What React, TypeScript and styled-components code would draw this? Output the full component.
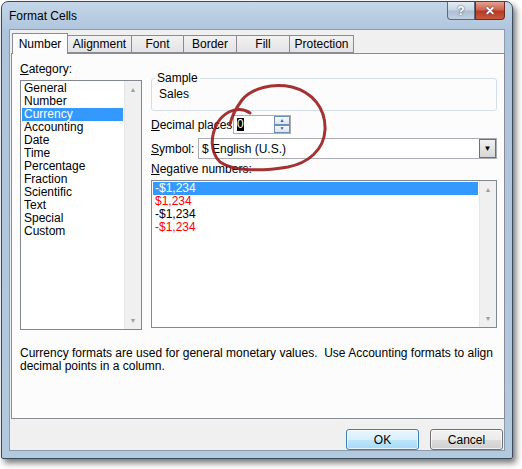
import React from 'react';
import styled, { createGlobalStyle } from 'styled-components';

const Global = createGlobalStyle`
  html, body { margin: 0; background: #ffffff; }
  body { font-family: "Liberation Sans", Arial, sans-serif; font-size: 12px; color: #000; }
`;

const Page = styled.div`
  position: relative;
  width: 522px;
  height: 469px;
  overflow: hidden;
`;

const Frame = styled.div`
  width: 512px;
  height: 458px;
  margin: 1px 0 0 1px;
  box-sizing: border-box;
  border: 1px solid #3a4a5c;
  border-radius: 7px 7px 2px 2px;
  background: linear-gradient(180deg, #c4d6e8 0px, #aec4db 30px, #b3c9de 100%);
  box-shadow: 3px 4px 6px rgba(0, 0, 0, 0.55);
  display: flex;
  flex-direction: column;
  padding: 0 7px 7px 7px;
`;

const TitleBar = styled.div`
  height: 29px;
  display: flex;
  align-items: center;
  justify-content: space-between;
`;

const TitleText = styled.span`
  font-size: 12px;
  color: #000;
`;

const Caps = styled.div`
  display: flex;
  align-self: flex-start;
`;

const CapButton = styled.div<{ close?: boolean }>`
  width: ${p => (p.close ? '30px' : '28px')};
  height: 18px;
  box-sizing: border-box;
  border: 1px solid ${p => (p.close ? '#6d2b22' : '#5b6b7c')};
  border-top: none;
  border-radius: ${p => (p.close ? '0 0 4px 0' : '0 0 0 4px')};
  background: ${p =>
    p.close
      ? 'linear-gradient(180deg, #e3a393 0%, #d0634f 45%, #b73a24 55%, #c85a3e 100%)'
      : 'linear-gradient(180deg, #e4ecf4 0%, #c8d6e4 45%, #aebfd1 55%, #c2d2e2 100%)'};
  display: flex;
  align-items: center;
  justify-content: center;
  color: #fff;
  font-weight: bold;
  font-size: 12px;
  text-shadow: 0 0 2px #333;
`;

const Body = styled.div`
  flex: 1;
  background: #f0f0f0;
  border: 1px solid #8a9bb0;
  display: flex;
  flex-direction: column;
  padding: 3px 1px 0 1px;
`;

const Tabs = styled.div`
  display: flex;
  padding-left: 1px;
  height: 20px;
  align-items: flex-end;
`;

const Tab = styled.div<{ active?: boolean; w: number }>`
  width: ${p => p.w}px;
  height: ${p => (p.active ? '21px' : '18px')};
  box-sizing: border-box;
  display: flex;
  align-items: center;
  justify-content: center;
  border: 1px solid #898c95;
  border-bottom: ${p => (p.active ? 'none' : '1px solid #898c95')};
  margin-left: ${p => (p.active ? '0' : '-1px')};
  background: ${p => (p.active ? '#fcfcfc' : 'linear-gradient(180deg, #f2f2f2, #e3e3e3)')};
  position: relative;
  z-index: ${p => (p.active ? 2 : 1)};
  margin-bottom: ${p => (p.active ? '-1px' : '0')};
`;

const Panel = styled.div`
  height: 366px;
  width: 494px;
  box-sizing: border-box;
  border: 1px solid #898c95;
  background: #fcfcfc;
  padding: 9px 7px 0 8px;
`;

const Columns = styled.div`
  display: flex;
  gap: 9px;
`;

const LeftCol = styled.div`
  width: 122px;
`;

const RightCol = styled.div`
  flex: 1;
  padding-top: 15px;
`;

const Label = styled.div`
  height: 13px;
  line-height: 13px;
  margin-bottom: 4px;
  white-space: nowrap;
`;

const U = styled.span`
  text-decoration: underline;
`;

const ListBox = styled.div<{ h: number }>`
  height: ${p => p.h}px;
  box-sizing: border-box;
  border: 1px solid #828790;
  background: #fff;
  display: flex;
`;

const Items = styled.div`
  flex: 1;
  padding: 1px 1px;
`;

const Item = styled.div<{ selected?: boolean; red?: boolean }>`
  height: 13px;
  line-height: 13px;
  padding-left: 2px;
  background: ${p => (p.selected ? '#3399ff' : 'transparent')};
  color: ${p => (p.selected ? '#fff' : p.red ? '#ff0000' : '#000')};
`;

const ScrollBar = styled.div`
  width: 17px;
  background: #f0f0f0;
  border-left: 1px solid #e6e6e6;
  display: flex;
  flex-direction: column;
  justify-content: space-between;
  align-items: center;
  padding: 5px 0;
  box-sizing: border-box;
  color: #a0a0a0;
  font-size: 7px;
`;

const GroupBox = styled.fieldset`
  margin: -6px 0 0 0;
  height: 39px;
  box-sizing: border-box;
  border: 1px solid #d5dfe5;
  border-radius: 3px;
  padding: 0 7px;
  legend {
    padding: 0 2px;
    margin-left: -4px;
    line-height: 12px;
  }
`;

const SampleValue = styled.div`
  padding-top: 3px;
`;

const FieldRow = styled.div`
  display: flex;
  align-items: center;
  margin-top: 4px;
  white-space: nowrap;
`;

const FieldLabel = styled.span<{ w: number }>`
  width: ${p => p.w}px;
  flex: none;
`;

const Spinner = styled.div`
  width: 58px;
  height: 19px;
  box-sizing: border-box;
  border: 1px solid #abadb3;
  background: #fff;
  display: flex;
  align-items: center;
  padding-left: 3px;
`;

const SelectedDigit = styled.span`
  background: #000;
  color: #fff;
  line-height: 13px;
`;

const SpinButtons = styled.div`
  margin-left: auto;
  display: flex;
  flex-direction: column;
  width: 16px;
  height: 17px;
`;

const SpinBtn = styled.div`
  flex: 1;
  border: 1px solid #6f8fb4;
  background: linear-gradient(180deg, #f4f8fc, #dbe6f2);
  display: flex;
  align-items: center;
  justify-content: center;
  color: #4a5e8a;
  font-size: 5px;
  line-height: 1;
`;

const Dropdown = styled.div`
  flex: 1;
  height: 21px;
  box-sizing: border-box;
  border: 1px solid #abadb3;
  background: #fff;
  display: flex;
  align-items: center;
  padding-left: 3px;
`;

const DropBtn = styled.div`
  margin-left: auto;
  width: 17px;
  height: 19px;
  box-sizing: border-box;
  border: 1px solid #707070;
  background: linear-gradient(180deg, #f2f2f2, #d6d6d6);
  display: flex;
  align-items: center;
  justify-content: center;
  font-size: 8px;
`;

const Description = styled.div`
  margin-top: 17px;
  line-height: 13px;
  width: 478px;
`;

const Footer = styled.div`
  display: flex;
  justify-content: flex-end;
  gap: 11px;
  padding: 10px 0 0 0;
`;

const Button = styled.button<{ primary?: boolean }>`
  width: 73px;
  height: 21px;
  font: inherit;
  font-size: 12px;
  border: 1px solid ${p => (p.primary ? '#3c7fb1' : '#707070')};
  border-radius: 3px;
  background: ${p =>
    p.primary
      ? 'linear-gradient(180deg, #eaf6fd 0%, #d9f0fc 50%, #bee6fd 51%, #a7d9f5 100%)'
      : 'linear-gradient(180deg, #f2f2f2 0%, #ebebeb 50%, #dddddd 51%, #cfcfcf 100%)'};
  box-shadow: inset 0 0 0 1px rgba(255, 255, 255, 0.7);
`;

const Annotation = styled.svg`
  position: absolute;
  left: 0;
  top: 0;
  pointer-events: none;
`;

const tabs: [string, number][] = [
  ['Number', 56], ['Alignment', 65], ['Font', 53], ['Border', 54], ['Fill', 54], ['Protection', 65],
];

export default function App() {
  const categories = ['General', 'Number', 'Currency', 'Accounting', 'Date', 'Time', 'Percentage', 'Fraction', 'Scientific', 'Text', 'Special', 'Custom'];
  return (
    <Page>
      <Global />
      <Frame>
        <TitleBar>
          <TitleText>Format Cells</TitleText>
          <Caps>
            <CapButton>?</CapButton>
            <CapButton close>✕</CapButton>
          </Caps>
        </TitleBar>
        <Body>
          <Tabs>
            {tabs.map(([t, w], i) => (
              <Tab key={t} w={w} active={i === 0}>{t}</Tab>
            ))}
          </Tabs>
          <Panel>
            <Columns>
              <LeftCol>
                <Label><U>C</U>ategory:</Label>
                <ListBox h={250}>
                  <Items>
                    {categories.map(c => (
                      <Item key={c} selected={c === 'Currency'}>{c}</Item>
                    ))}
                  </Items>
                  <ScrollBar><span>▲</span><span>▼</span></ScrollBar>
                </ListBox>
              </LeftCol>
              <RightCol>
                <GroupBox>
                  <legend>Sample</legend>
                  <SampleValue>Sales</SampleValue>
                </GroupBox>
                <FieldRow>
                  <FieldLabel w={82}><U>D</U>ecimal places:</FieldLabel>
                  <Spinner>
                    <SelectedDigit>0</SelectedDigit>
                    <SpinButtons>
                      <SpinBtn>▲</SpinBtn>
                      <SpinBtn>▼</SpinBtn>
                    </SpinButtons>
                  </Spinner>
                </FieldRow>
                <FieldRow>
                  <FieldLabel w={47}><U>S</U>ymbol:</FieldLabel>
                  <Dropdown>
                    $ English (U.S.)
                    <DropBtn>▼</DropBtn>
                  </Dropdown>
                </FieldRow>
                <Label style={{ marginTop: 4 }}><U>N</U>egative numbers:</Label>
                <ListBox h={148}>
                  <Items>
                    <Item selected>-$1,234</Item>
                    <Item red>$1,234</Item>
                    <Item>-$1,234</Item>
                    <Item red>-$1,234</Item>
                  </Items>
                  <ScrollBar><span>▲</span><span>▼</span></ScrollBar>
                </ListBox>
              </RightCol>
            </Columns>
            <Description>
              Currency formats are used for general monetary values.&nbsp; Use Accounting formats to align decimal points in a column.
            </Description>
          </Panel>
          <Footer>
            <Button primary>OK</Button>
            <Button>Cancel</Button>
          </Footer>
        </Body>
      </Frame>
      <Annotation width="522" height="469" viewBox="0 0 522 469">
        <path
          d="M250 113 C240 106 226 110 218 122 C210 136 210 152 220 162 C234 172 264 171 288 167 C308 163 324 150 325 130 C326 108 312 92 292 87 C272 83 252 88 242 100 C236 108 232 116 230 124"
          fill="none"
          stroke="#9b1c1c"
          strokeWidth="3"
          strokeLinecap="round"
          opacity="0.9"
        />
      </Annotation>
    </Page>
  );
}
